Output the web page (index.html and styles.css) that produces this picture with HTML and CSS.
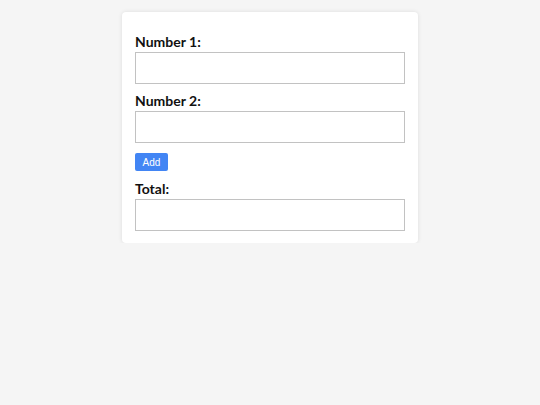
FILE: index.html
```html
<!DOCTYPE html>
<html lang="en">
<head>
    <meta charset="UTF-8">
    <meta name="viewport" content="width=device-width, initial-scale=1.0">
    <title>Add Numbers</title>
    <link rel="stylesheet" href="styles.css">
</head>
<body>
    <div class="card">
        <label class="field-label" for="num1">Number 1:</label>
        <input type="text" id="num1" class="field-input">

        <label class="field-label" for="num2">Number 2:</label>
        <input type="text" id="num2" class="field-input">

        <button class="add-btn" onclick="addNumbers()">Add</button>

        <label class="field-label" for="total">Total:</label>
        <input type="text" id="total" class="field-input" readonly>
    </div>

    <script>
        function addNumbers() {
            const a = parseFloat(document.getElementById('num1').value) || 0;
            const b = parseFloat(document.getElementById('num2').value) || 0;
            document.getElementById('total').value = a + b;
        }
    </script>
</body>
</html>
```

FILE: styles.css
```css
body {
    margin: 0;
    padding: 0;
    background-color: #f5f5f5;
    font-family: "Comic Sans MS", Lato, sans-serif;
}
.card {
    width: 296px;
    box-sizing: border-box;
    margin: 12px auto 0;
    padding: 21px 13px 12px 13px;
    background: #fff;
    border-radius: 4px;
    box-shadow: 0 0 4px rgba(0, 0, 0, 0.1);
    display: flex;
    flex-direction: column;
    align-items: flex-start;
}
.field-label {
    font-size: 14px;
    font-weight: bold;
    line-height: 17px;
    color: #111;
    margin-bottom: 2px;
}
.field-input {
    width: 100%;
    height: 32px;
    box-sizing: border-box;
    border: 1px solid #c2c2c2;
    margin: 0 0 8px;
    padding: 4px;
    font-size: 13px;
}
.field-input:last-child {
    margin-bottom: 0;
}
.add-btn {
    height: 18px;
    width: 33px;
    padding: 0;
    margin: 2px 0 9px;
    background-color: #4285f4;
    color: #fff;
    border: none;
    border-radius: 2px;
    font-family: "Liberation Sans", Arial, sans-serif;
    font-size: 10px;
    cursor: pointer;
}
```
